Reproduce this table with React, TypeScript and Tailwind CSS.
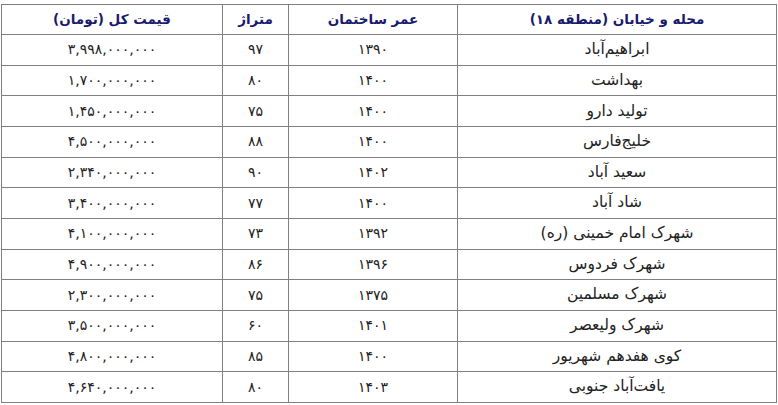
const rows: [string, string, string, string][] = [
  ["ابراهیم‌آباد", "۱۳۹۰", "۹۷", "۳,۹۹۸,۰۰۰,۰۰۰"],
  ["بهداشت", "۱۴۰۰", "۸۰", "۱,۷۰۰,۰۰۰,۰۰۰"],
  ["تولید دارو", "۱۴۰۰", "۷۵", "۱,۴۵۰,۰۰۰,۰۰۰"],
  ["خلیج‌فارس", "۱۴۰۰", "۸۸", "۴,۵۰۰,۰۰۰,۰۰۰"],
  ["سعید آباد", "۱۴۰۲", "۹۰", "۲,۳۴۰,۰۰۰,۰۰۰"],
  ["شاد آباد", "۱۴۰۰", "۷۷", "۳,۴۰۰,۰۰۰,۰۰۰"],
  ["شهرک امام خمینی (ره)", "۱۳۹۲", "۷۳", "۴,۱۰۰,۰۰۰,۰۰۰"],
  ["شهرک فردوس", "۱۳۹۶", "۸۶", "۴,۹۰۰,۰۰۰,۰۰۰"],
  ["شهرک مسلمین", "۱۳۷۵", "۷۵", "۲,۳۰۰,۰۰۰,۰۰۰"],
  ["شهرک ولیعصر", "۱۴۰۱", "۶۰", "۳,۵۰۰,۰۰۰,۰۰۰"],
  ["کوی هفدهم شهریور", "۱۴۰۰", "۸۵", "۴,۸۰۰,۰۰۰,۰۰۰"],
  ["یافت‌آباد جنوبی", "۱۴۰۳", "۸۰", "۴,۶۴۰,۰۰۰,۰۰۰"],
];

const headers = ["محله و خیابان (منطقه ۱۸)", "عمر ساختمان", "متراژ", "قیمت کل (تومان)"];
const widths = ["w-[319px]", "w-[169px]", "w-[66px]", "w-[221px]"];

export default function App() {
  return (
    <div className="min-h-[405px] bg-white pl-px pt-1 font-['DejaVu_Sans',sans-serif]">
      <table dir="rtl" className="w-[775px] table-fixed border-collapse border border-[#808080] text-center">
        <colgroup>
          {widths.map((w) => (
            <col key={w} className={w} />
          ))}
        </colgroup>
        <thead>
          <tr className="h-[30px]">
            {headers.map((h) => (
              <th key={h} className="border border-[#808080] p-0 text-[13.5px] font-bold text-[#1a1a6e]">
                {h}
              </th>
            ))}
          </tr>
        </thead>
        <tbody>
          {rows.map((r) => (
            <tr key={r[0]} className="h-[30.67px]">
              {r.map((c, i) => (
                <td
                  key={i}
                  className={
                    i === 0
                      ? "border border-[#808080] p-0 text-[15.5px] text-[#222222]"
                      : "border border-[#808080] p-0 text-[14px] text-[#222222]"
                  }
                >
                  {c}
                </td>
              ))}
            </tr>
          ))}
        </tbody>
      </table>
    </div>
  );
}
